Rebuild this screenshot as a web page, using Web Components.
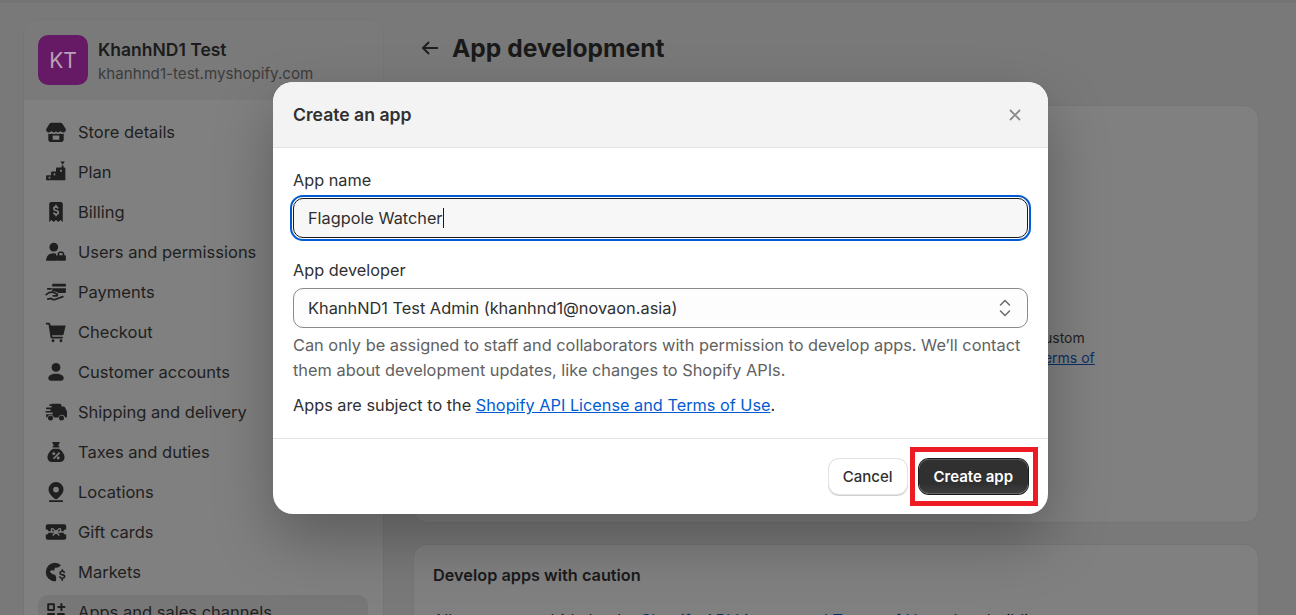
<!DOCTYPE html>
<html>
<head>
<meta charset="utf-8">
<title>App development</title>
<style>
  html, body { margin: 0; height: 100%; overflow: hidden; }
  body { font-family: Inter, "Liberation Sans", sans-serif; background: #797979; }
</style>
</head>
<body>
<settings-page>
  <settings-sidebar slot="sidebar">
    <nav-item icon="store">Store details</nav-item>
    <nav-item icon="plan">Plan</nav-item>
    <nav-item icon="billing">Billing</nav-item>
    <nav-item icon="users">Users and permissions</nav-item>
    <nav-item icon="payments">Payments</nav-item>
    <nav-item icon="cart">Checkout</nav-item>
    <nav-item icon="person">Customer accounts</nav-item>
    <nav-item icon="truck">Shipping and delivery</nav-item>
    <nav-item icon="taxes">Taxes and duties</nav-item>
    <nav-item icon="pin">Locations</nav-item>
    <nav-item icon="gift">Gift cards</nav-item>
    <nav-item icon="globe">Markets</nav-item>
    <nav-item icon="apps" selected>Apps and sales channels</nav-item>
  </settings-sidebar>
  <app-development slot="main"></app-development>
</settings-page>
<create-app-modal></create-app-modal>

<script>
const GAP = '#808080';
const ICONS = {
  store: `<path d="M6 1.500h8c.8 0 1.500.4 1.900 1.100L19 7.400c.2 1.600-1 3-2.500 3-1.100 0-2-.6-2.400-1.500-.4.900-1.300 1.500-2.200 1.500-.8 0-1.500-.4-1.900-1-.4.600-1.100 1-1.900 1-.9 0-1.800-.6-2.200-1.500-.4.900-1.300 1.500-2.400 1.500C2 10.400.8 9 1 7.400l3.100-4.800C4.500 1.900 5.200 1.500 6 1.500z"/><path fill-rule="evenodd" d="M3 11.700c1 .2 2 .1 2.800-.4.700.4 1.400.6 2.200.6.700 0 1.400-.2 2-.5.600.3 1.300.5 2 .5.800 0 1.500-.2 2.200-.6.800.5 1.800.6 2.800.4V17c0 1.100-.9 2-2 2H5c-1.100 0-2-.9-2-2zM7 13.200V17h6v-3.800z"/>`,
  plan: `<path d="M14 .500h4l-2 2.800z"/><path d="M15.100 4.200h1.800v1.800h.6c.6 0 1 .4 1 1V17.500H1v-3.500c0-.6.4-1 1-1h3.500v-2.500c0-.6.4-1 1-1H10V7c0-.6.4-1 1-1h4.100z"/><path fill="${GAP}" d="M3.300 14.300h1.600v1.700H3.300zM7.800 11.300h1.600V13H7.800zM13.700 8h1.600v1.800h-1.600z"/>`,
  billing: `<g transform="translate(1.200 0) scale(.88 1)"><path fill-rule="evenodd" d="M5 1h10c1.100 0 2 .9 2 2v16l-2.300-1.700-2.400 1.700L10 17.300 7.700 19l-2.400-1.700L3 19V3c0-1.100.9-2 2-2zm4.200 2.500v1.100c-1.400.2-2.300 1.100-2.300 2.300 0 1.400 1 2 2.300 2.300l1.300.3c.7.200 1 .4 1 .9 0 .6-.6.900-1.400.9s-1.500-.3-1.700-1l-1.600.4c.2 1.100 1.200 1.900 2.400 2.100v1.100h1.700v-1.100c1.400-.2 2.400-1.100 2.400-2.400 0-1.400-1-2-2.400-2.300l-1.300-.3c-.7-.2-1-.4-1-.8 0-.6.600-.9 1.200-.9.800 0 1.300.3 1.500.9l1.600-.4c-.3-1-1.100-1.700-2.100-1.900V3.500z"/></g>`,
  users: `<circle cx="8" cy="5.500" r="4"/><path d="M1 18c0-4.200 2.500-6.800 6.500-6.800 1 0 2 .2 2.800.5-.2.500-.3 1-.3 1.500V18z"/><path fill-rule="evenodd" d="M13.700 9.500h1.600c1.200 0 2.200.9 2.200 2.200V13h.5c.6 0 1 .4 1 1v3c0 .6-.4 1-1 1h-7c-.6 0-1-.4-1-1v-3c0-.6.4-1 1-1h.5v-1.300c0-1.300 1-2.200 2.200-2.200zm0 1.500c-.4 0-.7.300-.7.700V13h3v-1.300c0-.4-.3-.7-.7-.7z"/>`,
  payments: `<path d="M7.500 2.500H18c.6 0 1 .4 1 1V5H6.500V3.500c0-.6.4-1 1-1z"/><path d="M6.500 6.500H19v3.500c0 .6-.4 1-1 1h-5.500l-2.400-1.300c-1.100-.5-2.400-.6-3.600-.2z"/><g fill="none" stroke="#1f1f1f" stroke-width="1.500" stroke-linecap="round" stroke-linejoin="round"><path d="M2.500 7.200h3"/><path d="M1 12.500c1.800-2 4.200-2.800 6.600-2.200l3.200 1.600c.9.500.6 1.600-.4 1.600H7.500"/><path d="M2.500 16.500l3-.7c.9.900 2.400 1.400 3.700 1l7-2.600"/></g>`,
  cart: `<path d="M.8 1.500h2.400c.8 0 1.400.5 1.600 1.200l.3 1.300H18.800L16.900 12c-.2.600-.7 1-1.300 1H6.500l.2 1.300H16.200V16H6.500c-.8 0-1.400-.5-1.500-1.300L3.200 3.200H.8z"/><circle cx="7.300" cy="18" r="1.300"/><circle cx="14.500" cy="18" r="1.300"/>`,
  person: `<circle cx="10" cy="5.800" r="4"/><path d="M3 15.500c0-2.500 3-4 7-4s7 1.500 7 4c0 1.500-1 2.500-2.500 2.500h-9C4 18 3 17 3 15.500z"/>`,
  truck: `<path d="M6 2.500h7.500c.8 0 1.500.7 1.500 1.500v1h2c.5 0 .9.200 1.100.6l1.400 2.700c.3.400.5.900.5 1.400V14c0 .6-.4 1-1 1h-.8a3 3 0 0 0-5.900 0H8a3 3 0 0 0-5.900 0H2c-.6 0-1-.4-1-1v-2h6v-1.500H.5V9H5V7.500H1V6h5V4.500H4V3h2z"/><circle cx="5" cy="15.500" r="2.300"/><circle cx="15" cy="15.500" r="2.300"/>`,
  taxes: `<path fill-rule="evenodd" d="M6.500 1h7l-1.500 3.500h1V6H7V4.500h1zM7.300 7h5.400C15.700 9 17.800 12 17.800 14.700c0 2.600-1.800 4.300-4.300 4.300h-7c-2.500 0-4.300-1.700-4.300-4.300C2.200 12 4.300 9 7.300 7zM12.700 10l-5.500 5.600 1.100 1.100 5.500-5.600zM8 10.200a1.300 1.300 0 1 0 0 2.600 1.300 1.300 0 0 0 0-2.600zm4 4a1.300 1.300 0 1 0 0 2.600 1.300 1.300 0 0 0 0-2.600z"/>`,
  pin: `<path fill-rule="evenodd" d="M10 1a6.800 6.800 0 0 1 6.800 6.800c0 3-2.600 5.900-5.300 8.200-.8.700-2.100.7-3 0-2.700-2.300-5.300-5.200-5.300-8.200A6.800 6.800 0 0 1 10 1zm0 4.200a2.600 2.600 0 1 0 0 5.200 2.600 2.600 0 0 0 0-5.200z"/><rect x="3.500" y="17.400" width="13" height="1.600" rx=".8"/>`,
  gift: `<path d="M2.500 3h15c1 0 1.800.8 1.800 1.800V7.500a2.500 2.500 0 0 0 0 5v2.700c0 1-.8 1.800-1.800 1.800h-15c-1 0-1.800-.8-1.800-1.800v-2.700a2.500 2.500 0 0 0 0-5V4.800C.7 3.800 1.500 3 2.500 3z"/><g fill="none" stroke="${GAP}" stroke-width="1.300"><path d="M10 10C8.500 7.800 7.500 6.600 6.500 7s-1 2.600.5 3zm0 0c1.500-2.200 2.500-3.400 3.500-3s1 2.600-.5 3z"/><path d="M10 10l-3 3.200M10 10l3 3.200M.7 10H7M13 10h6.300"/></g>`,
  globe: `<circle cx="9" cy="10" r="8.300"/><path fill="${GAP}" d="M11 1l3.600 2.800-2.600 2-3 .3-.6 2.600-2.600-.4-1.500 1.500L7 12l2.200.5 1 2.500-.2 4h10V1z"/><path d="M14.900 7.500h1.500v1.200c1.100.2 1.900 1 2.100 2l-1.500.3c-.1-.6-.7-1-1.300-1-.7 0-1.200.3-1.200.8s.4.700 1.100.9l.8.2c1.400.3 2.200 1 2.200 2.200 0 1.100-.9 1.900-2.200 2.100V18h-1.500v-1.700c-1.200-.2-2.100-1-2.300-2.100l1.600-.3c.1.700.7 1.100 1.500 1.100s1.300-.3 1.300-.9c0-.4-.3-.7-1-.8l-.9-.2c-1.300-.3-2.100-1-2.100-2.200 0-1.100.8-1.900 1.900-2.100z"/>`,
  apps: `<path fill-rule="evenodd" d="M3 2h5c.6 0 1 .4 1 1v5c0 .6-.4 1-1 1H3c-.6 0-1-.4-1-1V3c0-.6.4-1 1-1zm.8 1.800v3.400h3.400V3.800zM3 11h5c.6 0 1 .4 1 1v5c0 .6-.4 1-1 1H3c-.6 0-1-.4-1-1v-5c0-.6.4-1 1-1zm.8 1.800v3.400h3.400v-3.400zM12 11h5c.6 0 1 .4 1 1v5c0 .6-.4 1-1 1h-5c-.6 0-1-.4-1-1v-5c0-.6.4-1 1-1z"/><path d="M14 2h1.800v2.600h2.600v1.800h-2.600V9H14V6.400h-2.600V4.600H14z"/>`
};

class SettingsPage extends HTMLElement {
  constructor() {
    super();
    this.attachShadow({ mode: 'open' });
    this.shadowRoot.innerHTML = `
      <style>
        :host {
          display: grid;
          grid-template-columns: 361px 1fr;
          column-gap: 29px;
          height: 615px;
          padding: 19px 37px 0 23px;
          box-sizing: border-box;
          overflow: hidden;
          border-top: 3px solid #737373;
        }
        .col { min-width: 0; margin-top: -3px; }
      </style>
      <div class="col"><slot name="sidebar"></slot></div>
      <div class="col"><slot name="main"></slot></div>
    `;
  }
}
customElements.define('settings-page', SettingsPage);

class SettingsSidebar extends HTMLElement {
  constructor() {
    super();
    this.attachShadow({ mode: 'open' });
    this.shadowRoot.innerHTML = `
      <style>
        :host {
          display: block;
          border: 1px solid #757575;
          border-radius: 14px;
          background: #808080;
          height: 700px;
          overflow: hidden;
        }
        header {
          display: flex;
          align-items: center;
          gap: 10px;
          height: 80px;
          padding: 0 14px;
          background: #7a7a7a;
        }
        .avatar {
          width: 50px;
          height: 50px;
          border-radius: 10px;
          background: #661a66;
          color: #b8a3b8;
          font-size: 21px;
          display: flex;
          align-items: center;
          justify-content: center;
        }
        .info { padding-top: 4px; }
        .name { font-size: 17.5px; font-weight: 600; line-height: 24px; color: #1c1c1c; }
        .domain { font-size: 15.150px; line-height: 24px; color: #3c3c3c; }
        nav { padding: 12px 14px; display: flex; flex-direction: column; }
      </style>
      <header>
        <div class="avatar">KT</div>
        <div class="info">
          <div class="name">KhanhND1 Test</div>
          <div class="domain">khanhnd1-test.myshopify.com</div>
        </div>
      </header>
      <nav><slot></slot></nav>
    `;
  }
}
customElements.define('settings-sidebar', SettingsSidebar);

class NavItem extends HTMLElement {
  constructor() {
    super();
    this.attachShadow({ mode: 'open' });
  }

  connectedCallback() {
    const icon = ICONS[this.getAttribute('icon')] || '';
    this.shadowRoot.innerHTML = `
      <style>
        :host {
          display: flex;
          align-items: center;
          gap: 11px;
          height: 40px;
          padding-left: 7px;
          border-radius: 10px;
          color: #1f1f1f;
          font-size: 16.500px;
        }
        :host([selected]) { background: #777; height: 34px; margin: 3px 1px 3px 0; }
        svg { width: 22px; height: 22px; fill: #1f1f1f; flex: none; }
      </style>
      <svg viewBox="0 0 20 20">${icon}</svg>
      <slot></slot>
    `;
  }
}
customElements.define('nav-item', NavItem);

class AppDevelopment extends HTMLElement {
  constructor() {
    super();
    this.attachShadow({ mode: 'open' });
    this.shadowRoot.innerHTML = `
      <style>
        :host { display: block; }
        .title {
          display: flex;
          align-items: center;
          gap: 12px;
          height: 58px;
          padding-left: 7px;
          font-size: 24.600px;
          font-weight: 700;
          color: #1a1a1a;
        }
        .title svg { width: 20px; height: 20px; fill: none; stroke: #1f1f1f; stroke-width: 2; }
        .card {
          border: 1px solid #757575;
          border-radius: 14px;
          background: #808080;
          box-sizing: border-box;
        }
        .top { height: 418px; padding-top: 222px; font-size: 14px; line-height: 20px; margin-top: 28px; }
        .top p { margin: 0 0 0 622px; color: #1f1f1f; }
        a { color: #0c2f66; }
        .bottom { margin-top: 21px; height: 200px; padding: 20px 19px; color: #1f1f1f; font-size: 16.300px; }
        h2 { margin: 0 0 25px; font-size: 16.300px; font-weight: 600; line-height: 20px; color: #1a1a1a; }
        .bottom p { margin: 0; white-space: nowrap; line-height: 20px; }
      </style>
      <div class="title">
        <svg viewBox="0 0 20 20"><path d="M18 10H3M9 4l-6 6 6 6"/></svg>
        <span>App development</span>
      </div>
      <section class="card top">
        <p>custom<br><a href="#">Terms of</a></p>
      </section>
      <section class="card bottom">
        <h2>Develop apps with caution</h2>
        <p>All apps must abide by the <a href="#">Shopify API License and Terms of Use</a> when building your apps</p>
      </section>
    `;
  }
}
customElements.define('app-development', AppDevelopment);

class TextField extends HTMLElement {
  constructor() {
    super();
    this.attachShadow({ mode: 'open' });
    this.shadowRoot.innerHTML = `
      <style>
        :host { display: block; }
        label { display: block; font-size: 16.300px; line-height: 24px; color: #303030; margin-bottom: 6px; }
        .box {
          height: 40px;
          box-sizing: border-box;
          display: flex;
          align-items: center;
          padding: 0 14px;
          border: 1px solid #1a1a1a;
          border-radius: 10px;
          background: #f7f7f7;
          outline: 2px solid #005bd3;
          outline-offset: 1px;
          font-size: 16.300px;
          color: #303030;
        }
        .caret { width: 1px; height: 20px; background: #1a1a1a; margin-left: 0; }
      </style>
      <label><slot name="label"></slot></label>
      <div class="box"><slot></slot><span class="caret"></span></div>
    `;
  }
}
customElements.define('text-field', TextField);

class SelectField extends HTMLElement {
  constructor() {
    super();
    this.attachShadow({ mode: 'open' });
    this.shadowRoot.innerHTML = `
      <style>
        :host { display: block; }
        label { display: block; font-size: 16.300px; line-height: 24px; color: #303030; margin-bottom: 6px; }
        .box {
          height: 40px;
          box-sizing: border-box;
          display: flex;
          align-items: center;
          justify-content: space-between;
          padding: 0 14px;
          border: 1px solid #8a8a8a;
          border-radius: 10px;
          background: #fdfdfd;
          font-size: 16.350px;
          color: #303030;
        }
        svg { width: 16px; height: 18px; fill: none; stroke: #6a6a6a; stroke-width: 1.500; stroke-linecap: round; stroke-linejoin: round; }
      </style>
      <label><slot name="label"></slot></label>
      <div class="box">
        <span><slot></slot></span>
        <svg viewBox="0 0 16 18"><path d="M3.500 6l4.500-4.500L12.500 6M3.500 12l4.500 4.500 4.500-4.500"/></svg>
      </div>
    `;
  }
}
customElements.define('select-field', SelectField);

class ModalButton extends HTMLElement {
  constructor() {
    super();
    this.attachShadow({ mode: 'open' });
    this.shadowRoot.innerHTML = `
      <style>
        :host {
          display: inline-flex;
          align-items: center;
          justify-content: center;
          height: 35px;
          box-sizing: border-box;
          padding: 0 14px;
          border-radius: 10px;
          font-size: 15px;
          font-weight: 500;
          color: #303030;
          background: #fff;
          box-shadow: 0 0 0 1px #e3e3e3, 0 1px 0 1px #d0d0d0;
        }
        :host([primary]) {
          padding: 0 15px;
          color: #fff;
          font-weight: 600;
          background: linear-gradient(#303030 70%, #3f3f3f);
          box-shadow: inset 0 1px 0 #555, inset 0 -1px 0 #666, 0 0 0 1px #1a1a1a;
        }
      </style>
      <slot></slot>
    `;
  }
}
customElements.define('modal-button', ModalButton);

class CreateAppModal extends HTMLElement {
  constructor() {
    super();
    this.attachShadow({ mode: 'open' });
    this.shadowRoot.innerHTML = `
      <style>
        :host {
          position: absolute;
          left: 273px;
          top: 82px;
          width: 775px;
          height: 432px;
          display: flex;
          flex-direction: column;
          background: #fff;
          border-radius: 20px;
          box-shadow: 0 26px 60px rgba(0,0,0,.28);
          color: #303030;
        }
        header {
          height: 66px;
          flex: none;
          box-sizing: border-box;
          display: flex;
          align-items: center;
          justify-content: space-between;
          padding: 0 26px 0 20px;
          background: #f3f3f3;
          border-bottom: 1px solid #e3e3e3;
          border-radius: 20px 20px 0 0;
          font-size: 17.600px;
          font-weight: 600;
          color: #303030;
        }
        header svg { width: 14px; height: 14px; stroke: #8a8a8a; stroke-width: 1.800; fill: none; }
        .body { flex: 1; padding: 20px 20px 0; display: flex; flex-direction: column; }
        .help { margin: 5px 0 0; font-size: 16.350px; line-height: 25px; color: #616161; }
        .terms { margin: 10px 0 0; font-size: 16.300px; line-height: 25px; color: #303030; }
        a { color: #005bd3; }
        footer {
          height: 76px;
          flex: none;
          box-sizing: border-box;
          border-top: 1px solid #e3e3e3;
          display: flex;
          justify-content: flex-end;
          align-items: center;
          gap: 12px;
          padding: 0 20px;
        }
        .highlight {
          position: absolute;
          left: 637px;
          top: 365px;
          width: 118px;
          height: 49px;
          border: 5px solid #ed1c24;
        }
      </style>
      <header>
        <span>Create an app</span>
        <svg viewBox="0 0 14 14"><path d="M2 2l10 10M12 2L2 12"/></svg>
      </header>
      <div class="body">
        <text-field style="margin-bottom:20px"><span slot="label">App name</span>Flagpole Watcher</text-field>
        <select-field><span slot="label">App developer</span>KhanhND1 Test Admin (khanhnd1@novaon.asia)</select-field>
        <p class="help">Can only be assigned to staff and collaborators with permission to develop apps. We’ll contact them about development updates, like changes to Shopify APIs.</p>
        <p class="terms">Apps are subject to the <a href="#">Shopify API License and Terms of Use</a>.</p>
      </div>
      <footer>
        <modal-button>Cancel</modal-button>
        <modal-button primary>Create app</modal-button>
      </footer>
      <div class="highlight"></div>
    `;
  }
}
customElements.define('create-app-modal', CreateAppModal);
</script>
</body>
</html>
